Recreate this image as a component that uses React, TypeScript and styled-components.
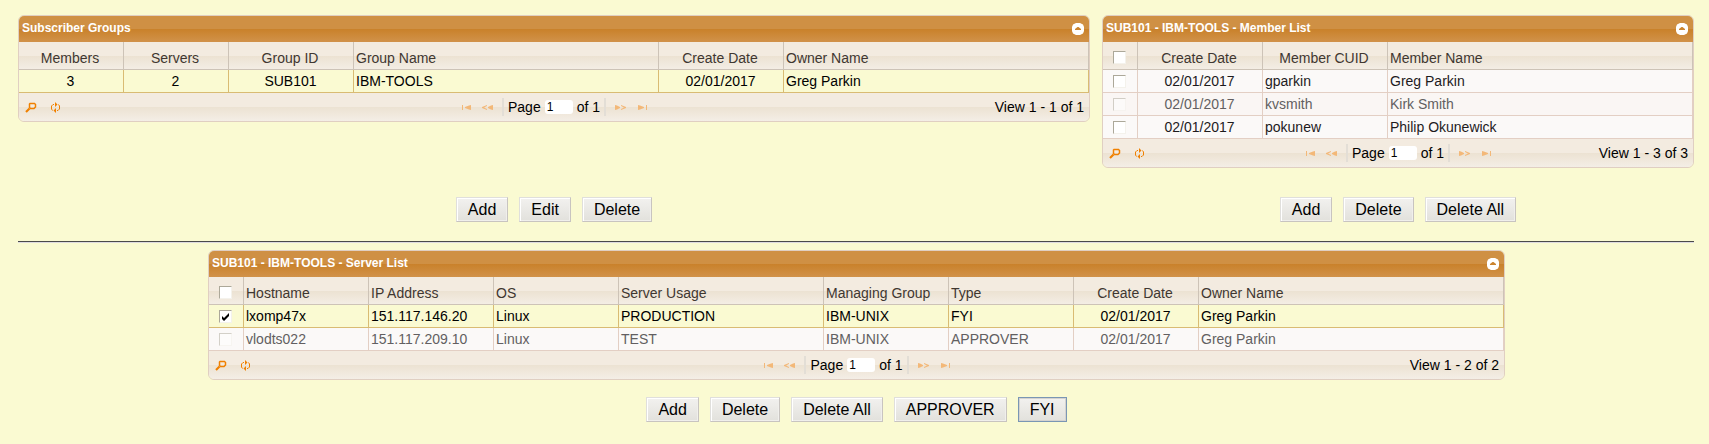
import React from "react";
import styled, { createGlobalStyle, css } from "styled-components";

const GlobalStyle = createGlobalStyle`
  * { box-sizing: border-box; }
  body {
    margin: 0;
    background: #fafad2;
    font-family: "Liberation Sans", Arial, Helvetica, sans-serif;
    font-size: 14px;
    line-height: 16px;
    color: #000;
  }
`;

const Page = styled.main`
  padding: 15px 15px 20px 18px;
`;

const TopArea = styled.div`
  display: grid;
  grid-template-columns: minmax(0, 1072fr) minmax(0, 592fr);
  column-gap: 12px;
`;

const TopColumn = styled.section`
  display: flex;
  flex-direction: column;
  justify-content: space-between;
`;

const ServerArea = styled.section`
  margin: 0 189px 0 190px;
`;

const Divider = styled.hr`
  height: 2px;
  margin: 19px 0 7px;
  border: 0;
  border-top: 1px solid #4a4a4a;
  border-bottom: 1px solid #dedbe0;
`;

const Panel = styled.div`
  overflow: hidden;
  border: 1px solid #e0cfc2;
  border-radius: 6px;
`;

const TitleBar = styled.header`
  display: flex;
  align-items: center;
  justify-content: space-between;
  height: 26px;
  padding: 0 5px 0 3px;
  background: linear-gradient(#cf9044 0 50%, #c9812a 50%, #d1924a 100%);
`;

const Title = styled.h2`
  margin: 0;
  padding-bottom: 2px;
  color: #fff;
  font-size: 12px;
  line-height: 14px;
`;

const IconButton = styled.button`
  display: flex;
  padding: 0;
  border: 0;
  background: none;
`;

const Table = styled.table`
  width: 100%;
  table-layout: fixed;
  border-collapse: separate;
  border-spacing: 0;
`;

type Align = "left" | "center";

const cell = css<{ $align: Align }>`
  overflow: hidden;
  text-align: ${(p) => p.$align};
  white-space: nowrap;
  font-weight: normal;
`;

const HeadCell = styled.th<{ $align: Align }>`
  ${cell}
  height: 28px;
  padding: 4px 4px 0 2px;
  border-right: 1px solid #cdc3b7;
  border-bottom: 1px solid #cdc3b7;
  color: #3f3731;
`;

const HeadRow = styled.tr`
  background: linear-gradient(#f3ebe0 0 50%, #ece2d2 50%, #f4eee6 100%);
`;

type RowState = "normal" | "selected" | "disabled";

const Cell = styled.td<{ $align: Align }>`
  ${cell}
  height: 23px;
  padding: 0 3px 0 2px;
  border-right: 1px solid #e3cfc4;
  border-bottom: 1px solid #e3cfc4;
`;

const Row = styled.tr<{ $state: RowState; $alt: boolean }>`
  background: ${(p) => (p.$state === "selected" ? "#fafad2" : p.$alt ? "#faf6f4" : "#fbf9f8")};
  color: ${(p) => (p.$state === "disabled" ? "#625f61" : p.$state === "selected" ? "#000" : "#1e1b1d")};
  ${(p) => p.$state === "selected" && css`
    ${Cell} { border-color: #d9bb73; }
  `}
`;

const Tick = styled.input`
  appearance: none;
  display: block;
  width: 13px;
  height: 13px;
  margin: 0 auto;
  border: 1px solid;
  border-color: #aca899 #f4f2ec #f4f2ec #aca899;
  background: #fff;
  &:disabled { opacity: 0.5; }
  &:checked {
    background: #fff url("data:image/svg+xml,%3Csvg xmlns='http://www.w3.org/2000/svg' viewBox='0 0 11 11'%3E%3Cpath d='M2 5v3l2 2 5-5V2L4 7z'/%3E%3C/svg%3E");
  }
`;

const Pager = styled.footer`
  display: grid;
  grid-template-columns: 1fr auto 1fr;
  align-items: center;
  height: 28px;
  padding: 0 5px;
  background: linear-gradient(#f3ebe0 0 50%, #ece2d2 50%, #f4eee6 100%);
`;

const Tools = styled.div`
  display: flex;
  gap: 12px;
`;

const Navigation = styled.div`
  display: flex;
  align-items: center;
  gap: 9px;
`;

const PageField = styled.label`
  display: flex;
  align-items: center;
  height: 18px;
  padding: 0 4px;
  border: solid #e3ded6;
  border-width: 0 2px;
  gap: 4px;
`;

const PageInput = styled.input`
  width: 28px;
  height: 14px;
  padding: 0 2px;
  border: 0;
  border-radius: 3px;
  background: #fff;
  font: 12px "Liberation Sans", Arial, sans-serif;
`;

const Summary = styled.span`
  text-align: right;
`;

const Actions = styled.div`
  display: flex;
  justify-content: center;
  gap: 11px;
`;

const GroupActions = styled(Actions)`
  margin-top: 29px;
`;

const ServerActions = styled(Actions)`
  margin-top: 17px;
`;

const ActionButton = styled.button<{ $focused?: boolean }>`
  height: 25px;
  padding: 0 11px;
  border: 1px solid;
  border-color: ${(p) => (p.$focused ? "#7a96b4" : "#e0dfdc #c8c4c0 #c8c4c0 #e0dfdc")};
  background: linear-gradient(#f2f1ef, #e2e1dc);
  box-shadow: ${(p) => (p.$focused ? "inset 0 0 0 1px #d5d3cf" : "inset 1px 1px #fff, inset -1px -1px #f0efec")};
  color: #000;
  font: 16px "Liberation Sans", Arial, sans-serif;
`;

const SearchIcon = () => (
  <svg width="13" height="13" viewBox="0 0 13 13" fill="none" stroke="#f08000">
    <path d="M5.5 3V6.5L6.5 7.5H10L11.5 6V3.5L10.5 2.5H6Z" strokeWidth="1.5" />
    <path d="M2 11L5.5 7.5" strokeWidth="2.2" />
  </svg>
);

const RefreshIcon = () => (
  <svg width="13" height="13" viewBox="0 0 13 13" fill="none" stroke="#f08000">
    <path d="M5 3.5H4L2.5 5V8L3.5 9.5M8 9.5H9L10.5 8V5L9.5 3.5" />
    <path d="M6 1V6L8.5 3.5Z M7 7V12L4.5 9.5Z" fill="#f08000" stroke="none" />
  </svg>
);

const navPaths = {
  first: "M2 2h1v5H2z M11 2v5L9 6.5L5 5V4L9 2.5z",
  prev: "M12 2v5L10 6.5L7 5V4L10 2.5z M6 2v1L3 4.5L6 6v1L1 5V4z",
  next: "M0 2v5L2 6.5L5 5V4L2 2.5z M6 2v1L9 4.5L6 6v1L11 5V4z",
  last: "M2 2v5L4 6.5L8 5V4L4 2.5z M10 2h1v5h-1z",
};

const NavIcon = ({ kind }: { kind: keyof typeof navPaths }) => (
  <svg width="12" height="9" viewBox="0 0 12 9" fill="#f3b878">
    <path d={navPaths[kind]} />
  </svg>
);

const CollapseIcon = () => (
  <svg width="12" height="12" viewBox="0 0 12 12">
    <path d="M4 0H8L11 1.5L12 4V8L11 10.5L8 12H4L1 10.5L0 8V4L1 1.5Z" fill="#fff" />
    <path d="M3 7V6L5.5 4H6.5L9 6V7Z" fill="#cb842e" />
  </svg>
);

interface Column {
  label: string;
  width: number;
  align?: Align;
  headAlign?: Align;
}

interface RowData {
  values: string[];
  state?: RowState;
}

interface GridProps {
  title: string;
  columns: Column[];
  rows: RowData[];
  selectable?: boolean;
}

const DataGrid = ({ title, columns, rows, selectable }: GridProps) => (
  <Panel>
    <TitleBar>
      <Title>{title}</Title>
      <IconButton type="button" aria-label={`Collapse ${title}`}><CollapseIcon /></IconButton>
    </TitleBar>
    <Table>
      <colgroup>
        {selectable && <col style={{ width: 35 }} />}
        {columns.map((c) => <col key={c.label} style={{ width: c.width }} />)}
      </colgroup>
      <thead>
        <HeadRow>
          {selectable && (
            <HeadCell $align="center"><Tick type="checkbox" aria-label="Select all" /></HeadCell>
          )}
          {columns.map((c) => (
            <HeadCell key={c.label} $align={c.headAlign ?? c.align ?? "left"}>{c.label}</HeadCell>
          ))}
        </HeadRow>
      </thead>
      <tbody>
        {rows.map((r, i) => (
          <Row key={i} $state={r.state ?? "normal"} $alt={i % 2 === 1 && rows.length > 2}>
            {selectable && (
              <Cell $align="center">
                <Tick
                  type="checkbox"
                  aria-label={`Select ${r.values[0]}`}
                  defaultChecked={r.state === "selected"}
                  disabled={r.state === "disabled"}
                />
              </Cell>
            )}
            {r.values.map((v, j) => (
              <Cell key={j} $align={columns[j].align ?? "left"}>{v}</Cell>
            ))}
          </Row>
        ))}
      </tbody>
    </Table>
    <Pager>
      <Tools>
        <IconButton type="button" aria-label="Search"><SearchIcon /></IconButton>
        <IconButton type="button" aria-label="Refresh"><RefreshIcon /></IconButton>
      </Tools>
      <Navigation>
        <IconButton type="button" aria-label="First page"><NavIcon kind="first" /></IconButton>
        <IconButton type="button" aria-label="Previous page"><NavIcon kind="prev" /></IconButton>
        <PageField>
          Page <PageInput defaultValue="1" /> of 1
        </PageField>
        <IconButton type="button" aria-label="Next page"><NavIcon kind="next" /></IconButton>
        <IconButton type="button" aria-label="Last page"><NavIcon kind="last" /></IconButton>
      </Navigation>
      <Summary>{`View 1 - ${rows.length} of ${rows.length}`}</Summary>
    </Pager>
  </Panel>
);

const groupColumns: Column[] = [
  { label: "Members", width: 105, align: "center" },
  { label: "Servers", width: 105, align: "center" },
  { label: "Group ID", width: 125, align: "center" },
  { label: "Group Name", width: 305 },
  { label: "Create Date", width: 125, align: "center" },
  { label: "Owner Name", width: 305 },
];

const memberColumns: Column[] = [
  { label: "Create Date", width: 125, align: "center" },
  { label: "Member CUID", width: 125, headAlign: "center" },
  { label: "Member Name", width: 305 },
];

const serverColumns: Column[] = [
  { label: "Hostname", width: 125 },
  { label: "IP Address", width: 125 },
  { label: "OS", width: 125 },
  { label: "Server Usage", width: 205 },
  { label: "Managing Group", width: 125 },
  { label: "Type", width: 125 },
  { label: "Create Date", width: 125, align: "center" },
  { label: "Owner Name", width: 305 },
];

const groups: RowData[] = [
  { values: ["3", "2", "SUB101", "IBM-TOOLS", "02/01/2017", "Greg Parkin"], state: "selected" },
];

const members: RowData[] = [
  { values: ["02/01/2017", "gparkin", "Greg Parkin"] },
  { values: ["02/01/2017", "kvsmith", "Kirk Smith"], state: "disabled" },
  { values: ["02/01/2017", "pokunew", "Philip Okunewick"] },
];

const servers: RowData[] = [
  {
    values: ["lxomp47x", "151.117.146.20", "Linux", "PRODUCTION", "IBM-UNIX", "FYI", "02/01/2017", "Greg Parkin"],
    state: "selected",
  },
  {
    values: ["vlodts022", "151.117.209.10", "Linux", "TEST", "IBM-UNIX", "APPROVER", "02/01/2017", "Greg Parkin"],
    state: "disabled",
  },
];

export default function App() {
  return (
    <>
      <GlobalStyle />
      <Page>
        <TopArea>
          <TopColumn>
            <DataGrid title="Subscriber Groups" columns={groupColumns} rows={groups} />
            <GroupActions>
              <ActionButton type="button">Add</ActionButton>
              <ActionButton type="button">Edit</ActionButton>
              <ActionButton type="button">Delete</ActionButton>
            </GroupActions>
          </TopColumn>
          <TopColumn>
            <DataGrid title="SUB101 - IBM-TOOLS - Member List" columns={memberColumns} rows={members} selectable />
            <GroupActions>
              <ActionButton type="button">Add</ActionButton>
              <ActionButton type="button">Delete</ActionButton>
              <ActionButton type="button">Delete All</ActionButton>
            </GroupActions>
          </TopColumn>
        </TopArea>
        <Divider />
        <ServerArea>
          <DataGrid title="SUB101 - IBM-TOOLS - Server List" columns={serverColumns} rows={servers} selectable />
          <ServerActions>
            <ActionButton type="button">Add</ActionButton>
            <ActionButton type="button">Delete</ActionButton>
            <ActionButton type="button">Delete All</ActionButton>
            <ActionButton type="button">APPROVER</ActionButton>
            <ActionButton type="button" $focused>FYI</ActionButton>
          </ServerActions>
        </ServerArea>
      </Page>
    </>
  );
}
